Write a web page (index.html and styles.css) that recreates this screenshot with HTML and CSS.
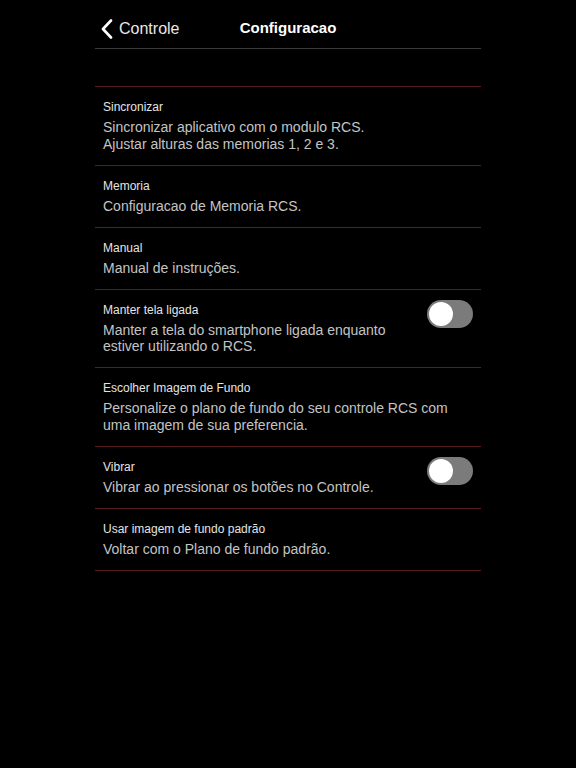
FILE: index.html
```html
<!DOCTYPE html>
<html lang="pt">
<head>
    <meta charset="UTF-8">
    <meta name="viewport" content="width=device-width, initial-scale=1.0">
    <title>Configuracao</title>
    <link rel="stylesheet" href="styles.css">
</head>
<body>
    <div class="container">
        <header class="topbar">
            <a href="#" class="back">
                <svg width="12" height="20" viewBox="0 0 12 20"><path d="M10 1.5 L2 10 L10 18.5" fill="none" stroke="#fff" stroke-width="2.6" stroke-linecap="round" stroke-linejoin="round"/></svg>
                <span>Controle</span>
            </a>
            <h1>Configuracao</h1>
        </header>

        <ul class="settings">
            <li class="item">
                <div class="text">
                    <div class="title">Sincronizar</div>
                    <div class="desc">Sincronizar aplicativo com o modulo RCS.<br>Ajustar alturas das memorias 1, 2 e 3.</div>
                </div>
            </li>
            <li class="item">
                <div class="text">
                    <div class="title">Memoria</div>
                    <div class="desc">Configuracao de Memoria RCS.</div>
                </div>
            </li>
            <li class="item">
                <div class="text">
                    <div class="title">Manual</div>
                    <div class="desc">Manual de instruções.</div>
                </div>
            </li>
            <li class="item">
                <div class="text">
                    <div class="title">Manter tela ligada</div>
                    <div class="desc">Manter a tela do smartphone ligada enquanto<br>estiver utilizando o RCS.</div>
                </div>
                <span class="toggle"></span>
            </li>
            <li class="item">
                <div class="text">
                    <div class="title">Escolher Imagem de Fundo</div>
                    <div class="desc">Personalize o plano de fundo do seu controle RCS com<br>uma imagem de sua preferencia.</div>
                </div>
            </li>
            <li class="item">
                <div class="text">
                    <div class="title">Vibrar</div>
                    <div class="desc">Vibrar ao pressionar os botões no Controle.</div>
                </div>
                <span class="toggle"></span>
            </li>
            <li class="item">
                <div class="text">
                    <div class="title">Usar imagem de fundo padrão</div>
                    <div class="desc">Voltar com o Plano de fundo padrão.</div>
                </div>
            </li>
        </ul>
    </div>
</body>
</html>
```

FILE: styles.css
```css
body {
    font-family: "Liberation Sans", Arial, sans-serif;
    background-color: #000;
    color: #fff;
    margin: 0;
}
.container {
    width: 386px;
    margin: 0 auto;
}
.topbar {
    position: relative;
    height: 48px;
    display: flex;
    align-items: center;
    justify-content: center;
    border-bottom: 1px solid #3a3a3a;
}
.back {
    position: absolute;
    left: 6px;
    top: 19px;
    display: flex;
    align-items: center;
    gap: 6px;
    color: #e8e8e8;
    text-decoration: none;
    font-size: 16px;
}
.topbar h1 {
    margin: 0;
    font-size: 15px;
    font-weight: bold;
    color: #fff;
    padding-top: 6px;
}
.settings {
    list-style: none;
    margin: 37px 0 0;
    padding: 0;
    border-top: 1px solid #5a1e1e;
}
.item {
    display: flex;
    align-items: flex-start;
    justify-content: space-between;
    padding: 12px 8px 12px;
    border-bottom: 1px solid #5a1e1e;
}
.title {
    font-size: 12px;
    line-height: 16px;
    color: #e4e4e4;
    margin-bottom: 4px;
}
.desc {
    font-size: 14px;
    line-height: 16.5px;
    color: #c4c4c4;
    padding-bottom: 0.5px;
}
.toggle {
    position: relative;
    flex: none;
    width: 46px;
    height: 28px;
    margin-top: -2px;
    border-radius: 14px;
    background-color: #7b7b7b;
}
.toggle::after {
    content: "";
    position: absolute;
    left: 2px;
    top: 2px;
    width: 24px;
    height: 24px;
    border-radius: 50%;
    background-color: #fff;
}
```
